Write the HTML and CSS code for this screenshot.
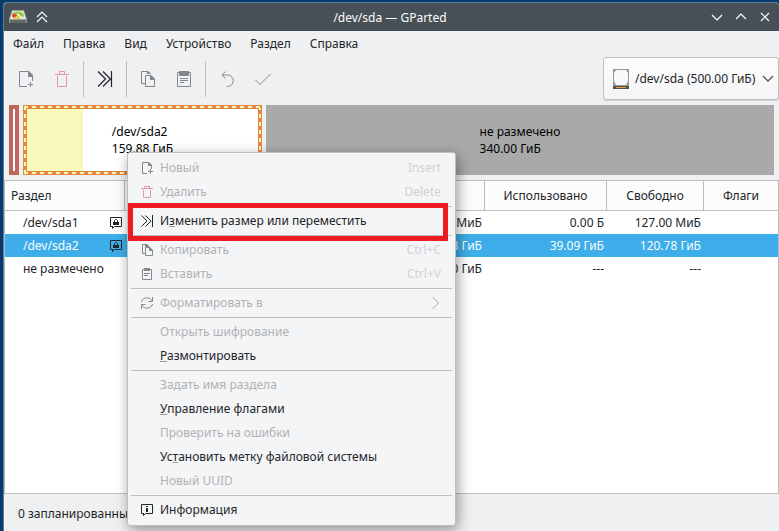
FILE: index.html
```html
<!DOCTYPE html>
<html lang="ru">
<head>
<meta charset="utf-8">
<title>/dev/sda — GParted</title>
<link rel="stylesheet" href="styles.css">
</head>
<body>
<svg class="defs" aria-hidden="true">
  <symbol id="i-new" viewBox="0 0 16 16"><path d="M9 15.500H1.500V.5H10.500L14.500 4.500V10" fill="none" stroke="currentColor"/><path d="M10 0h1l4 4v2h-5z" fill="currentColor"/><path d="M12.500 11v5M10 13.500h5" stroke="currentColor"/></symbol>
  <symbol id="i-del" viewBox="0 0 16 16"><path d="M1 3.500h14M5.500 3V.5h5V3M3.500 5v10.500h9V5" fill="none" stroke="currentColor"/></symbol>
  <symbol id="i-resize" viewBox="0 0 16 16"><path d="M1 .5L8.500 8 1 15.500M6 .5L13.500 8 6 15.500M14.500 0v16" fill="none" stroke="currentColor" stroke-width="1.200"/></symbol>
  <symbol id="i-copy" viewBox="0 0 16 16"><path d="M5 12.500H1.500V.5H8L10 2.500M5.500 15.500V4.500H11L14.500 8v7.500z" fill="none" stroke="currentColor"/><path d="M10 4h1l4 4v1h-5zM7 0h1l3 3H7z" fill="currentColor"/></symbol>
  <symbol id="i-paste" viewBox="0 0 16 16"><path d="M1.500 1.500h13v14h-13zM4 7.500h8M4 9.500h8M4 11.500h4" fill="none" stroke="currentColor"/><path d="M3 0h10v5H3z" fill="currentColor"/></symbol>
  <symbol id="s-new" viewBox="0 0 12 12"><path d="M6 11.500H1.500V.5H7.500L10.500 3.500V7" fill="none" stroke="currentColor"/><path d="M7 0h1l3 3v1H7z" fill="currentColor"/><path d="M9.500 7v5M7 9.500h5" stroke="currentColor"/></symbol>
  <symbol id="s-del" viewBox="0 0 12 12"><path d="M0 2.500h12M3.500 2V.5h5V2M2.500 4v7.500h7V4" fill="none" stroke="currentColor"/></symbol>
  <symbol id="s-resize" viewBox="0 0 12 12"><path d="M.5.5L6 6 .5 11.500M4.500.5L10 6l-5.500 5.500M11.500 0v12" fill="none" stroke="currentColor"/></symbol>
  <symbol id="s-copy" viewBox="0 0 12 12"><path d="M4 9.500H1.500V.5H5L7 2.500M4.500 11.500V3.500H8.500L11.500 6.500v5z" fill="none" stroke="currentColor"/><path d="M8 3h1l3 3v1H8zM4 0h2l2 2v1H4z" fill="currentColor"/></symbol>
  <symbol id="s-paste" viewBox="0 0 12 12"><path d="M1.500 1.500h9v10h-9zM3 5.500h6M3 7.500h4" fill="none" stroke="currentColor"/><path d="M3 0h6v3H3z" fill="currentColor"/></symbol>
  <symbol id="s-refresh" viewBox="0 0 12 12"><path d="M.5 5C1 2.500 3 .8 6 .8c2 0 4 1 5.300 3.200M11.500 7C11 9.500 9 11.200 6 11.200 4 11.200 2 10.200.7 8M11.500 0v4.500H7.500M.5 12V7.500h4" fill="none" stroke="currentColor"/></symbol>
  <symbol id="i-info" viewBox="0 0 12 12"><path d="M3 9.500H.5V.5h11v9H4.500L2.500 11.500V9.500" fill="none" stroke="currentColor"/><path d="M5 2h2v1H5zM5 4h2v4H5z" fill="currentColor"/></symbol>
  <symbol id="i-lock" viewBox="0 0 12 12"><path d="M3 9.500H.5V.5h11v9H4.500L2.500 11.500V9.500" fill="none" stroke="currentColor"/><path d="M3 5h6v3H3z" fill="currentColor"/><path d="M4.500 5V3.500L5.500 2.500h1L7.500 3.500V5" fill="none" stroke="currentColor"/></symbol>
</svg>

<main class="window">
  <header class="titlebar">
    <div class="title-side">
      <svg class="app-icon" viewBox="0 0 18 14" aria-hidden="true"><path d="M3 0h12l3 9v4H0V9z" fill="#9a9c94"/><path d="M3.500 1h11l2.500 8H1z" fill="#e6e6df"/><ellipse cx="9" cy="5" rx="6" ry="3.500" fill="#8ccf4c"/><path d="M9 5L4 3.500C2.500 5 3 7 5 8z" fill="#e8432e"/><path d="M9 5L5 8c2 1 4 .8 5 .3z" fill="#f3c64b"/><path d="M8 4l5 4" stroke="#fff" stroke-width="1.500"/><path d="M1 10h16v3H1z" fill="#686a62"/></svg>
      <button class="title-button" aria-label="Свернуть в заголовок"><svg viewBox="0 0 12 12"><path d="M1 6l5-5 5 5M1 11l5-5 5 5"/></svg></button>
    </div>
    <h1>/dev/sda — GParted</h1>
    <div class="title-side end">
      <button class="title-button" aria-label="Свернуть"><svg viewBox="0 0 12 12"><path d="M1 4l5 5 5-5"/></svg></button>
      <button class="title-button" aria-label="Развернуть"><svg viewBox="0 0 12 12"><path d="M1 8l5-5 5 5"/></svg></button>
      <button class="title-button" aria-label="Закрыть"><svg viewBox="0 0 12 12"><path d="M2 2l8 8M10 2l-8 8"/></svg></button>
    </div>
  </header>

  <nav class="menubar">
    <button>Файл</button><button>Правка</button><button>Вид</button><button>Устройство</button><button>Раздел</button><button>Справка</button>
  </nav>

  <div class="toolbar">
    <div class="group">
      <button aria-label="Новый"><svg><use href="#i-new"/></svg></button>
      <button class="danger" aria-label="Удалить"><svg><use href="#i-del"/></svg></button>
    </div>
    <div class="group"><button class="active" aria-label="Изменить размер или переместить"><svg><use href="#i-resize"/></svg></button></div>
    <div class="group">
      <button aria-label="Копировать"><svg><use href="#i-copy"/></svg></button>
      <button aria-label="Вставить"><svg><use href="#i-paste"/></svg></button>
    </div>
    <div class="group">
      <button aria-label="Отменить"><svg viewBox="0 0 16 16"><path d="M6.500.5L3 4l3.500 3.500M3 4H8.500a5.500 5.500 0 0 1 0 11.500H7.500" fill="none" stroke="currentColor"/></svg></button>
      <button aria-label="Применить"><svg viewBox="0 0 16 16"><path d="M.5 9l4.500 4.500L15.500 3" fill="none" stroke="currentColor"/></svg></button>
    </div>
    <div class="device">
      <svg class="disk" viewBox="0 0 16 20" aria-hidden="true"><path d="M0 0h16v20H0z" fill="#939b9b"/><path d="M3 1h10l2 3v8l-2 4H3l-2-4V4z" fill="#f6f8f9"/><path d="M0 17h16v3H0z" fill="#4d5355"/><path d="M3 18h10v1H3z" fill="#f0a030"/></svg>
      <select aria-label="Устройство"><option>/dev/sda (500.00 ГиБ)</option></select>
      <svg class="chevron" viewBox="0 0 12 12" aria-hidden="true"><path d="M1 3l5 5 5-5" fill="none" stroke="#555" stroke-width="1.300"/></svg>
    </div>
  </div>

  <section class="partitions" aria-label="Разметка диска">
    <div class="part part-boot"></div>
    <div class="part part-main"><div class="inner"><div>/dev/sda2<br>159.88 ГиБ</div></div></div>
    <div class="part part-free"><div>не размечено<br>340.00 ГиБ</div></div>
  </section>

  <div class="list">
    <table>
      <colgroup><col class="c-name"><col class="c-fs"><col class="c-label"><col class="c-size"><col class="c-used"><col class="c-unused"><col class="c-flags"></colgroup>
      <thead><tr><th>Раздел</th><th></th><th></th><th>Размер</th><th>Использовано</th><th>Свободно</th><th>Флаги</th></tr></thead>
      <tbody>
        <tr><td><div class="name">/dev/sda1<svg><use href="#i-lock"/></svg></div></td><td></td><td></td><td>128.00 МиБ</td><td>0.00 Б</td><td>127.00 МиБ</td><td></td></tr>
        <tr class="selected"><td><div class="name">/dev/sda2<svg><use href="#i-lock"/></svg></div></td><td></td><td></td><td>159.88 ГиБ</td><td>39.09 ГиБ</td><td>120.78 ГиБ</td><td></td></tr>
        <tr><td><div class="name">не размечено</div></td><td></td><td></td><td>340.00 ГиБ</td><td>---</td><td>---</td><td></td></tr>
      </tbody>
    </table>
  </div>

  <footer>0 запланированных операций</footer>
</main>

<div class="context" role="menu">
  <button role="menuitem" disabled><svg><use href="#s-new"/></svg><span>Новый</span><kbd>Insert</kbd></button>
  <button role="menuitem" disabled><svg class="danger"><use href="#s-del"/></svg><span>Удалить</span><kbd>Delete</kbd></button>
  <hr>
  <button role="menuitem"><svg><use href="#s-resize"/></svg><span>И<u>з</u>менить размер или переместить</span></button>
  <hr>
  <button role="menuitem" disabled><svg><use href="#s-copy"/></svg><span>Копировать</span><kbd>Ctrl+C</kbd></button>
  <button role="menuitem" disabled><svg><use href="#s-paste"/></svg><span>Вставить</span><kbd>Ctrl+V</kbd></button>
  <hr>
  <button role="menuitem" disabled><svg><use href="#s-refresh"/></svg><span>Форматировать в</span><svg class="arrow" viewBox="0 0 12 12"><path d="M3.500 0l6 6-6 6" fill="none" stroke="currentColor"/></svg></button>
  <hr>
  <button role="menuitem" disabled><i></i><span>Открыть шифрование</span></button>
  <button role="menuitem"><i></i><span><u>Р</u>азмонтировать</span></button>
  <hr>
  <button role="menuitem" disabled><i></i><span>Задать имя раздела</span></button>
  <button role="menuitem"><i></i><span><u>У</u>правление флагами</span></button>
  <button role="menuitem" disabled><i></i><span>Проверить на ошибки</span></button>
  <button role="menuitem"><i></i><span>Ус<u>т</u>ановить метку файловой системы</span></button>
  <button role="menuitem" disabled><i></i><span>Новый UUID</span></button>
  <hr>
  <button role="menuitem"><svg><use href="#i-info"/></svg><span>Информация</span></button>
  <div class="highlight"></div>
</div>
</body>
</html>
```
FILE: styles.css
```css
* { box-sizing: border-box; }
body {
  margin: 0;
  min-height: 100vh;
  padding: 2px 0 0 3px;
  display: flex;
  background: #073a6d;
  color: #232629;
  font: 12px/17px "Noto Sans", sans-serif;
  overflow: hidden;
}
button, select { font: inherit; color: inherit; border: 0; background: none; padding: 0; margin: 0; }
.defs { position: absolute; width: 0; height: 0; }

.window {
  flex: 1;
  min-width: 0;
  display: flex;
  flex-direction: column;
  background: #eff0f1;
  border: solid #5f7c96;
  border-width: 1px 0 0 1px;
  border-radius: 4px 4px 0 0;
  overflow: hidden;
}

.titlebar { display: flex; align-items: center; height: 28px; background: #475057; color: #fcfcfc; padding: 0 8px 0 5px; }
.titlebar h1 { margin: 0; font-size: 12px; font-weight: 400; }
.title-side { flex: 1; display: flex; align-items: center; gap: 9px; }
.title-side.end { justify-content: flex-end; gap: 12px; }
.app-icon { width: 18px; height: 14px; }
.title-button, .title-button svg { display: block; width: 12px; height: 12px; }
.title-button path { fill: none; stroke: #fcfcfc; stroke-width: 1.2; }

.menubar { display: flex; gap: 19px; padding: 4px 9px; }

.toolbar { display: flex; align-items: center; height: 45px; }
.group { display: flex; height: 36px; padding: 0 3px; border-right: 1px solid #bcbebf; }
.group:first-child { padding-left: 4px; }
.group:nth-child(4) { border: 0; }
.toolbar button { display: grid; place-items: center; width: 36px; color: #85888b; }
.toolbar button svg { width: 16px; height: 16px; }
.toolbar .danger, .context .danger { color: #e795a0; }
.toolbar .active { color: #232629; }
.device {
  margin-left: auto;
  display: flex;
  align-items: center;
  height: 43px;
  gap: 6px;
  padding: 0 4px 0 9px;
  border: 1px solid #bcbebf;
  border-radius: 3px;
  background: linear-gradient(#fdfdfd, #f3f4f5);
  box-shadow: 0 1px 0 #d3d4d5;
}
.disk { width: 16px; height: 20px; }
.device select { appearance: none; }
.chevron { width: 12px; height: 12px; }

.partitions { display: grid; grid-template-columns: 10px 159.88fr 340fr; gap: 4px; height: 70px; margin: 4px 5px 5px; color: #000; }
.part-boot { border: 4px solid #c1665a; background: #fff; }
.part-main {
  padding: 4px;
  background:
    repeating-linear-gradient(90deg, #f8f8ba 0 4px, #e5873f 4px 8px) 1px 1px / calc(100% - 2px) 2px no-repeat,
    repeating-linear-gradient(90deg, #f8f8ba 0 4px, #e5873f 4px 8px) 1px calc(100% - 1px) / calc(100% - 2px) 2px no-repeat,
    repeating-linear-gradient(#f8f8ba 0 4px, #e5873f 4px 8px) 1px 1px / 2px calc(100% - 2px) no-repeat,
    repeating-linear-gradient(#f8f8ba 0 4px, #e5873f 4px 8px) calc(100% - 1px) 1px / 2px calc(100% - 2px) no-repeat,
    #e5873f;
}
.inner { display: grid; place-items: center; height: 100%; background: linear-gradient(90deg, #f8f8ba 24.45%, #fff 24.45%); }
.part-free { display: grid; place-items: center; background: #a9a9a9; }

.list { flex: 1; background: #fff; border: 1px solid #bcbebf; }
table { width: 100%; table-layout: fixed; border-collapse: separate; border-spacing: 0; }
.c-name { width: 120px; } .c-fs { width: 130px; } .c-label { width: 130px; } .c-size { width: 100px; }
.c-used { width: 122px; } .c-unused { width: 97px; }
th { height: 30px; padding: 0; font-weight: 400; background: #fcfcfc; border: solid #bcbebf; border-width: 0 1px 1px 0; }
th:first-child { text-align: left; padding-left: 6px; }
th:last-child { border-right: 0; }
td { height: 23px; padding: 0 3px; text-align: right; }
.name { display: flex; align-items: center; justify-content: space-between; padding-left: 15px; }
.name svg { width: 12px; height: 12px; color: #232629; }
.selected td { background: #3daee9; color: #fcfcfc; }

footer { padding: 11px 14px 9px; }

.context {
  position: absolute;
  left: 127px;
  top: 152px;
  width: 329px;
  padding: 3px;
  border: 1px solid #bcbebf;
  border-radius: 3px;
  background: #f4f5f7;
  box-shadow: 2px 4px 14px rgba(0, 0, 0, .4);
}
.context button { display: flex; align-items: center; gap: 7px; width: 100%; height: 24px; padding: 0 11px 0 10px; text-align: left; }
.context button:disabled { color: #b0b2b4; }
.context span, .context kbd { padding-bottom: 2px; }
.context svg, .context i { flex: none; width: 12px; height: 12px; }
.context button:disabled svg { color: #85888b; }
.context button:disabled svg.danger { color: #e795a0; }
.context button:disabled svg.arrow { margin-left: auto; color: #a5a7a9; }
.context kbd { margin-left: auto; font: inherit; color: #d0d2d3; }
.context u { text-decoration-color: #9a9c9e; }
.context hr { height: 1px; margin: 2px 0; border: 0; background: #bcbebf; }
.highlight { position: absolute; left: 0; top: 50px; width: 320px; height: 38px; border: 5px solid #ed1c24; pointer-events: none; }
```
